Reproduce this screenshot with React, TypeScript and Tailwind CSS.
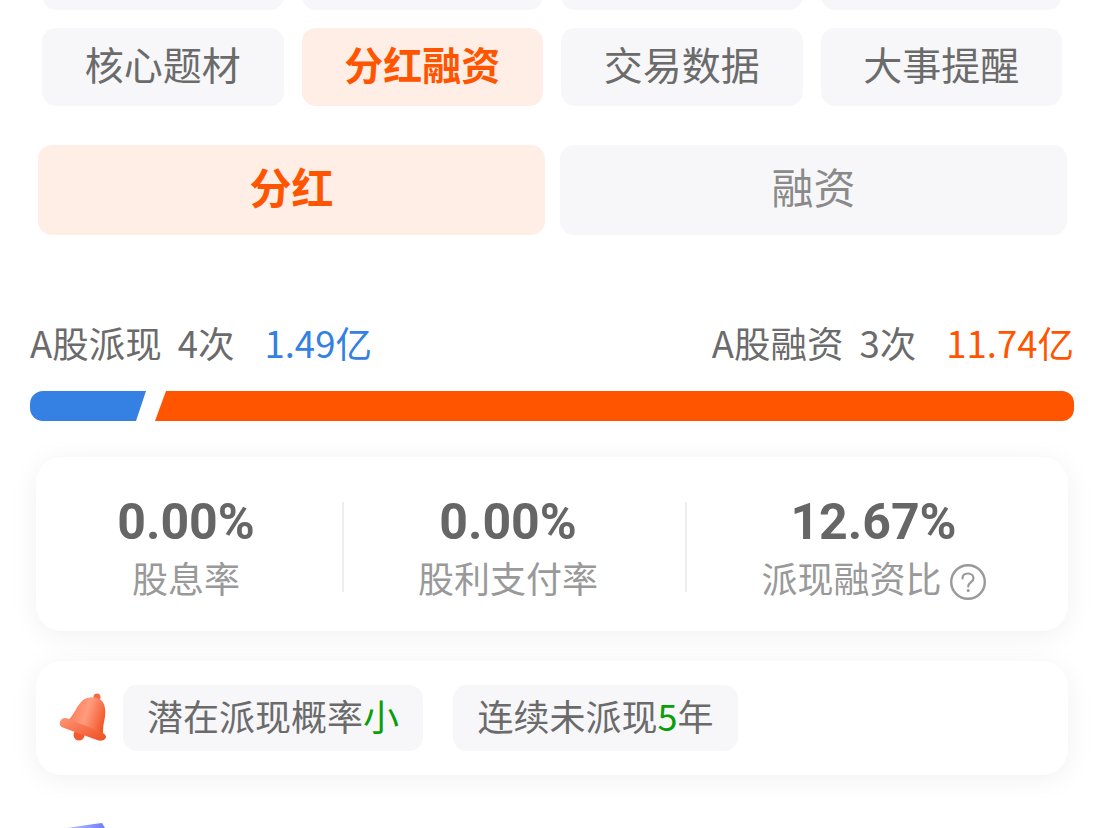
const cjk = "font-['Noto_Sans_CJK_SC','Noto_Sans',sans-serif]";

const tabs = ['核心题材', '分红融资', '交易数据', '大事提醒'];

function Bell() {
  return (
    <svg width="50" height="52" viewBox="0 0 50 52" className="shrink-0">
      <defs>
        <linearGradient id="bellBody" x1="0.1" y1="0.3" x2="1" y2="0.6">
          <stop offset="0" stopColor="#ff7d58" />
          <stop offset="0.45" stopColor="#ff9c7e" />
          <stop offset="1" stopColor="#f2552a" />
        </linearGradient>
        <linearGradient id="bellRim" x1="0" y1="0" x2="1" y2="1">
          <stop offset="0" stopColor="#ff9474" />
          <stop offset="1" stopColor="#f04e22" />
        </linearGradient>
      </defs>
      <circle cx="38" cy="5" r="3.5" fill="#f66a42" />
      <circle cx="20" cy="43" r="5.5" fill="#f25a30" />
      <path d="M8 29 C14 25 17 15 23 9 C28 4 38 4 43 9 C47 14 47 22 45 30 C44 34 44 38 44 43 Z" fill="url(#bellBody)" />
      <path d="M1 30 C2 26 6 25 10 27 L44 41 C47 43 48 45 46 47 C44 49 41 49 38 48 L5 36 C2 35 0 33 1 30 Z" fill="url(#bellRim)" />
    </svg>
  );
}

function Help() {
  return (
    <svg width="36" height="36" viewBox="0 0 36 36" className="mt-[10px] shrink-0">
      <circle cx="18" cy="18" r="16.8" fill="none" stroke="#999999" strokeWidth="2.4" />
      <path d="M12.5 14.5 C12.5 11 15 9.5 18 9.5 C21 9.5 23.5 11.3 23.5 14.2 C23.5 18 18.2 18.2 18.2 22.5" fill="none" stroke="#999999" strokeWidth="2.2" strokeLinecap="round" />
      <circle cx="18.2" cy="26.5" r="1.5" fill="#999999" />
    </svg>
  );
}

function Stat({ value, label, help }: { value: string; label: string; help?: boolean }) {
  return (
    <div className="flex flex-col items-center pt-[8px]">
      <div className="font-['Roboto',sans-serif] text-[50px] leading-[58px] font-bold text-[#666666]">{value}</div>
      <div className="mt-[-1px] flex items-center gap-[8px] text-[36px] leading-[54px] text-[#999999]">
        <span>{label}</span>
        {help && <Help />}
      </div>
    </div>
  );
}

export default function App() {
  return (
    <div className={`${cjk} relative h-[828px] w-[1103px] overflow-hidden bg-white`}>
      <div className="mt-[-68px] grid grid-cols-4 gap-[18px] pr-[41px] pl-[42px]">
        {tabs.map((t) => (
          <div key={'top' + t} className="h-[78px] rounded-[14px] bg-[#f7f7fa]" />
        ))}
        {tabs.map((t) => (
          <div
            key={t}
            className={
              t === '分红融资'
                ? 'flex h-[78px] items-center justify-center rounded-[14px] bg-[#ffeee6] pb-[7px] text-[39px] font-bold text-[#ff5500]'
                : 'flex h-[78px] items-center justify-center rounded-[14px] bg-[#f7f7fa] pb-[7px] text-[39px] text-[#6b6b6b]'
            }
          >
            {t}
          </div>
        ))}
      </div>

      <div className="mt-[39px] grid grid-cols-2 gap-[15px] pr-[36px] pl-[38px]">
        <div className="flex h-[90px] items-center justify-center rounded-[14px] bg-[#ffeee6] pb-[9px] text-[42px] font-bold text-[#ff5500]">分红</div>
        <div className="flex h-[90px] items-center justify-center rounded-[14px] bg-[#f7f7fa] pb-[9px] text-[42px] text-[#8a8a8a]">融资</div>
      </div>

      <div className="mt-[80px] flex h-[56px] items-center justify-between pr-[29px] pl-[30px] text-[36.5px] text-[#6b6b6b]">
        <div className="flex items-center">
          <span>A股派现</span>
          <span className="ml-[16px]">4次</span>
          <span className="ml-[30px] text-[#3480e3]">1.49亿</span>
        </div>
        <div className="flex items-center">
          <span>A股融资</span>
          <span className="ml-[16px]">3次</span>
          <span className="ml-[30px] text-[#ff5500]">11.74亿</span>
        </div>
      </div>

      <div className="mt-[20px] flex h-[30px] pr-[29px] pl-[30px]">
        <div className="h-full w-[116px] rounded-l-[13px] bg-[#3480e3] [clip-path:polygon(0_0,100%_0,106px_100%,0_100%)]" />
        <div className="ml-[9px] h-full flex-1 rounded-r-[12px] bg-[#ff5500] [clip-path:polygon(11px_0,100%_0,100%_100%,0_100%)]" />
      </div>

      <div className="mt-[36px] ml-[36px] flex h-[174px] w-[1032px] items-center rounded-[26px] bg-white shadow-[0_4px_30px_rgba(0,0,0,0.06)]">
        <div className="flex w-[306px] justify-center pr-[6px]"><Stat value="0.00%" label="股息率" /></div>
        <div className="mt-[6px] h-[90px] w-[2px] bg-[#eeeeee]" />
        <div className="flex w-[341px] justify-center pr-[13px]"><Stat value="0.00%" label="股利支付率" /></div>
        <div className="mt-[6px] h-[90px] w-[2px] bg-[#eeeeee]" />
        <div className="flex flex-1 justify-center pr-[8px]"><Stat value="12.67%" label="派现融资比" help /></div>
      </div>

      <div className="mt-[30px] ml-[36px] flex h-[114px] w-[1032px] items-center rounded-[26px] bg-white pl-[23px] shadow-[0_4px_30px_rgba(0,0,0,0.06)]">
        <Bell />
        <div className="ml-[14px] flex h-[66px] w-[300px] items-center justify-center rounded-[14px] bg-[#f7f7fa] pb-[6px] text-[36px] text-[#6b6b6b]">
          潜在派现概率<span className="text-[#0a9e0a]">小</span>
        </div>
        <div className="ml-[30px] flex h-[66px] w-[285px] items-center justify-center rounded-[14px] bg-[#f7f7fa] pb-[6px] text-[36px] text-[#6b6b6b]">
          连续未派现<span className="text-[#0a9e0a]">5</span>年
        </div>
      </div>

      <svg width="50" height="8" viewBox="0 0 50 8" className="absolute top-[822px] left-[58px]">
        <defs>
          <linearGradient id="book" x1="0" y1="0" x2="1" y2="0">
            <stop offset="0" stopColor="#c5d0ff" />
            <stop offset="1" stopColor="#6f7dfa" />
          </linearGradient>
        </defs>
        <path d="M2 7 L36 2 L44 1 L47 6 L47 8 L2 8 Z" fill="url(#book)" />
      </svg>
    </div>
  );
}
